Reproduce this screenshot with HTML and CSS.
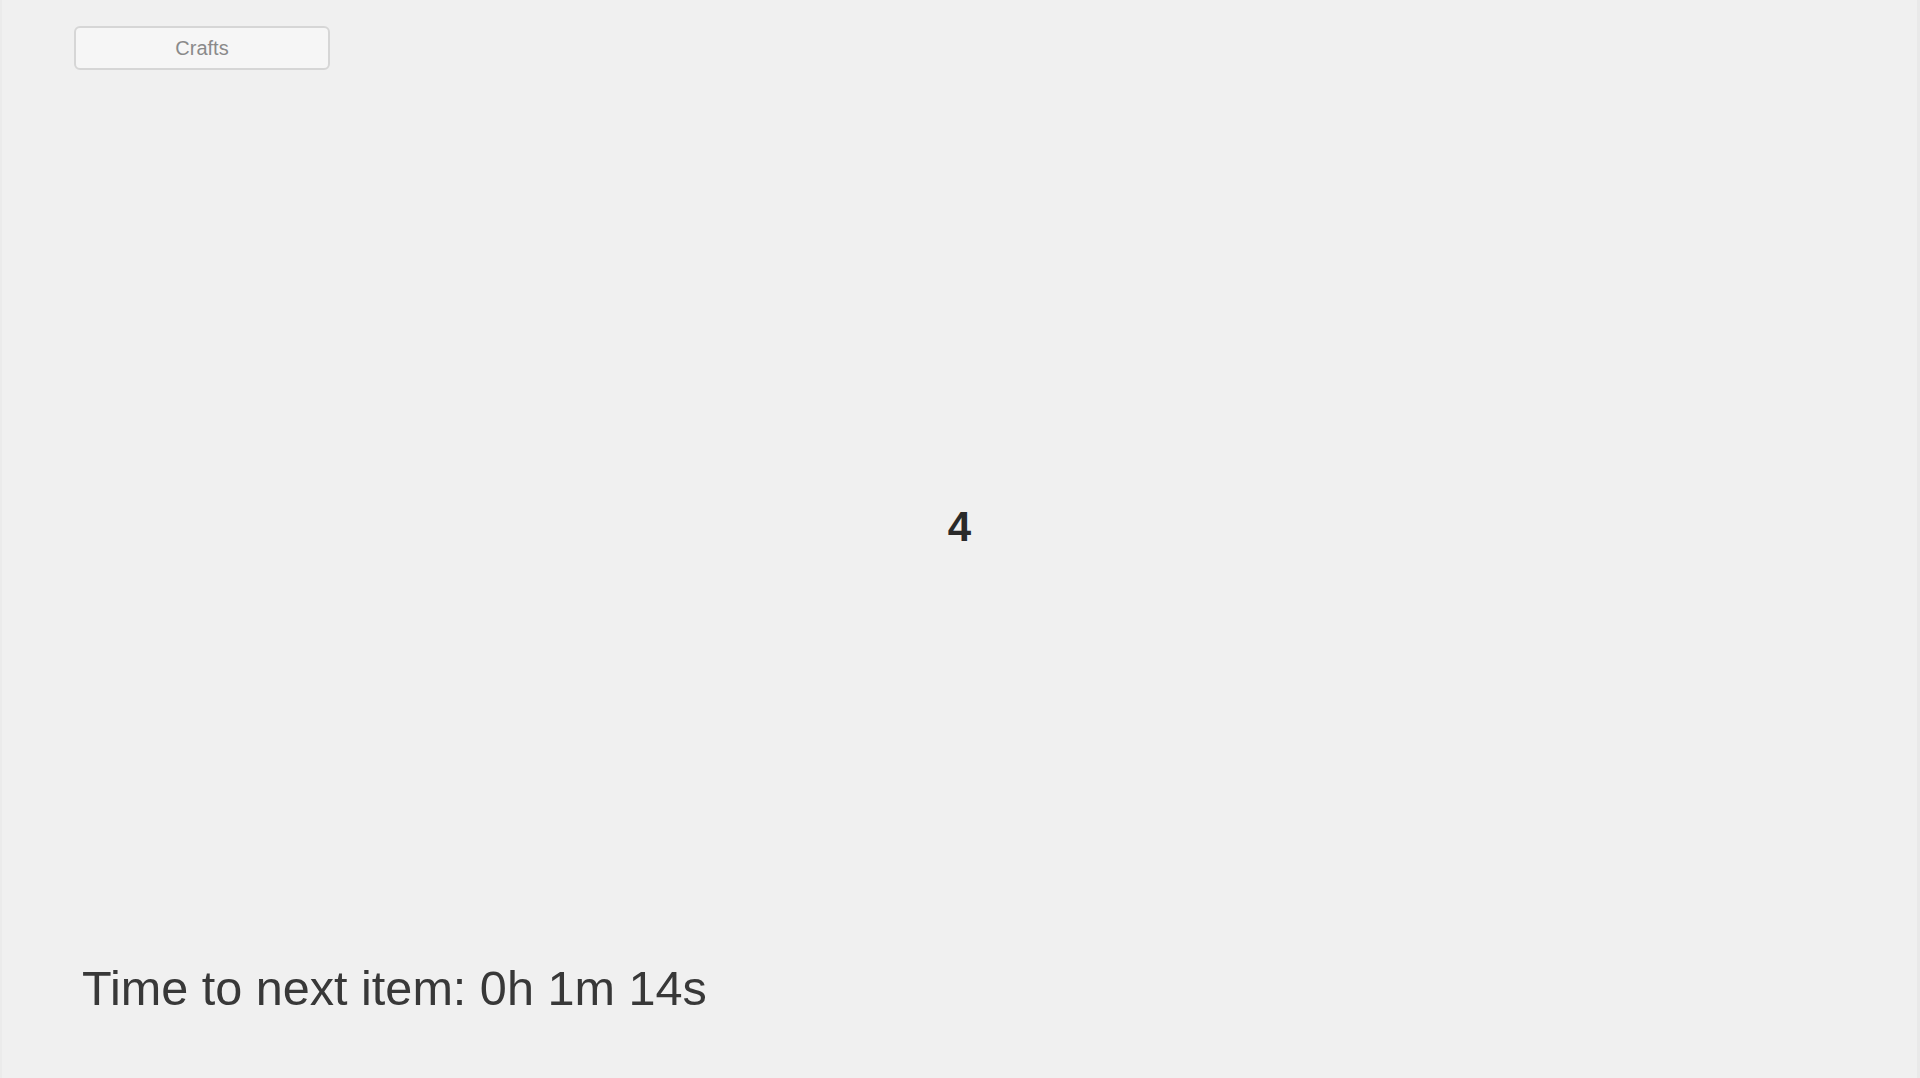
FILE: index.html
```html
<!DOCTYPE html>
<html lang="en">
<head>
<meta charset="utf-8">
<title>Crafts</title>
<link rel="stylesheet" href="styles.css">
</head>
<body>
<div class="screen">
  <div class="topbar">
    <button class="btn">Crafts</button>
  </div>
  <div class="count">4</div>
  <div class="timer">Time to next item: 0h 1m 14s</div>
</div>
</body>
</html>
```

FILE: styles.css
```css
html, body {
  margin: 0;
  padding: 0;
  height: 100%;
  background: #f0f0f0;
  font-family: "Liberation Sans", Arial, sans-serif;
}

.screen {
  box-sizing: border-box;
  height: 1078px;
  display: flex;
  flex-direction: column;
  padding-top: 26px;
  border-left: 2px solid #ebebeb;
  border-right: 3px solid #e9e9e9;
  overflow: hidden;
}

.topbar {
  display: flex;
  padding-left: 72px;
}

.btn {
  box-sizing: border-box;
  width: 256px;
  height: 44px;
  background: #f6f6f6;
  border: 2px solid #d6d6d6;
  border-radius: 6px;
  font-family: "Liberation Sans", Arial, sans-serif;
  font-size: 20px;
  color: #8a8a8a;
  padding: 0;
}

.count {
  margin-top: 433px;
  height: 48px;
  line-height: 48px;
  text-align: center;
  font-size: 42px;
  font-weight: bold;
  color: #2a2a2a;
}

.timer {
  margin-top: 409px;
  padding-left: 80px;
  height: 56px;
  line-height: 56px;
  font-size: 48.6px;
  color: #383838;
}
```
